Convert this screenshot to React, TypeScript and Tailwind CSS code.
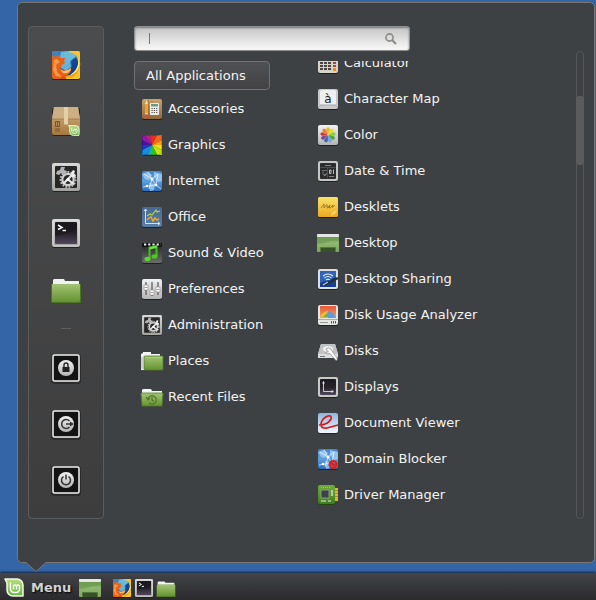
import type { ReactNode } from "react";

type IconProps = { className?: string };

function Gradient({ id, from, to, mid }: { id: string; from: string; to: string; mid?: string }) {
  return (
    <linearGradient id={id} x1="0" y1="0" x2="0" y2="1">
      <stop offset="0" stopColor={from} />
      {mid && <stop offset=".5" stopColor={mid} />}
      <stop offset="1" stopColor={to} />
    </linearGradient>
  );
}

function SharedDefs() {
  return (
    <svg className="absolute size-0" aria-hidden="true">
      <defs>
        <Gradient id="green" from="#a3c476" to="#659330" />
        <Gradient id="deskGreen" from="#6d9a52" mid="#8fb76f" to="#7da85c" />
        <Gradient id="silver" from="#f2f2f2" to="#b4b4b4" />
        <Gradient id="frame" from="#d8d8d6" to="#a2a2a0" />
        <Gradient id="sky" from="#3f87cf" mid="#5c9fdf" to="#2b6fb8" />
        <Gradient id="office" from="#476a94" to="#5a7ea6" />
        <Gradient id="screen" from="#1c1a20" mid="#252129" to="#51475c" />
        <Gradient id="wood" from="#c9a36c" to="#94693a" />
        <Gradient id="box" from="#d3b285" to="#a5783f" />
        <Gradient id="note" from="#fbe36a" to="#eda81f" />
        <Gradient id="paper" from="#8fb5dc" to="#f1f6fb" />
        <Gradient id="video" from="#222" to="#6d6d6d" />
        <Gradient id="flame" from="#f08a2c" to="#d9530f" />
        <Gradient id="globe" from="#5fb2dd" mid="#2f77c0" to="#12377f" />
        <Gradient id="mint" from="#b6e07f" to="#69b53f" />
        <Gradient id="board" from="#6fae3a" to="#3f7d20" />
        <Gradient id="pie" from="#e8583b" to="#f2a267" />
      </defs>
    </svg>
  );
}

function Svg({ box, className, children }: { box: string; className?: string; children: ReactNode }) {
  return (
    <svg viewBox={box} className={`shrink-0 overflow-visible ${className ?? "size-5"}`} aria-hidden="true">
      {children}
    </svg>
  );
}

function Shade() {
  return <rect x="0" y="1" width="20" height="20" rx="2" fill="#000" opacity=".5" />;
}

function Firefox({ className }: IconProps) {
  return (
    <Svg box="0 0 28 28" className={className}>
      <rect y="1" width="28" height="28" rx="2" fill="#000" opacity=".5" />
      <rect width="28" height="28" rx="2" fill="url(#flame)" />
      <path d="M17 0h9a2 2 0 0 1 2 2v24a2 2 0 0 1-2 2H14z" fill="#fbc52a" />
      <path d="M0 7V2a2 2 0 0 1 2-2h14v9L5 6z" fill="#3c84b9" />
      <circle cx="16" cy="13" r="11.500" fill="url(#globe)" />
      <path d="M9 1l6-1 7 3 2 3-4 2-2 3 1 5-5 4-5-3-1-9z" fill="#6fbfdd" opacity=".85" />
      <path d="M19 10l5-4 3 6-2 7-6 5-6 1-3-3 6-2 4-4z" fill="#123f8c" opacity=".9" />
      <path d="M23 2c6 7 4 17-5 22l-6 1 7 2c11-5 12-18 4-25z" fill="#f3a21d" />
      <path d="M25 5c3 8 0 15-7 19 10-2 12-13 7-19z" fill="#ffe95e" />
      <path d="M0 4l3 2 3-2 2 3h6l-2 2 1 3-3 2-2 3c3 4 8 3 11 0 1 4-3 8-8 8l-3 3H2l-2-2z" fill="#e6621b" />
      <path d="M2 9l3-1 3 3-4 3 1 7 5 5-6-1-3-6z" fill="#f79a42" />
      <path d="M8 18c3 3 7 2 11-1 0 4-4 6-8 5z" fill="#f9bd6a" />
    </Svg>
  );
}

function MintBadge() {
  return (
    <g>
      <path d="M1 1h12a6 6 0 0 1 6 6v11H9a6 6 0 0 1-6-6V5z" fill="url(#mint)" stroke="#f3f8ee" strokeWidth="1.500" strokeLinejoin="round" />
      <path d="M6.500 4.500V11a3.500 3.500 0 0 0 3.500 3.500h2A3.300 3.300 0 0 0 15.500 11V8.500a1.500 1.500 0 0 0-3 0V11.500M12.500 8.500a1.500 1.500 0 0 0-3 0v3" fill="none" stroke="#fff" strokeWidth="1.400" />
    </g>
  );
}

function MintLogo({ className }: IconProps) {
  return (
    <Svg box="0 0 20 19" className={className}>
      <MintBadge />
    </Svg>
  );
}

function Package({ className }: IconProps) {
  return (
    <Svg box="0 0 28 28" className={className}>
      <rect y="1" width="28" height="28" rx="2" fill="#000" opacity=".5" />
      <path d="M2 0h24l2 12v14a2 2 0 0 1-2 2H2a2 2 0 0 1-2-2V12z" fill="url(#box)" />
      <path d="M2 0h24l2 12H0z" fill="#cdaf84" />
      <path d="M0 12h28" stroke="#a67e4b" />
      <path d="M12 0h4v17l-1 1-1-1-1 1-1-1z" fill="#e2cfa8" />
      <path d="M3.500 14.500h4v5h-4zM5.500 14.500v5M3 22h5M3 24h5" fill="none" stroke="#7b5329" />
      <g transform="translate(16 18) scale(.58)"><MintBadge /></g>
    </Svg>
  );
}

function Gears({ className }: IconProps) {
  return (
    <Svg box="0 0 28 28" className={className}>
      <rect y="1" width="28" height="28" rx="2" fill="#000" opacity=".5" />
      <rect width="28" height="28" rx="2" fill="url(#frame)" />
      <rect x="3" y="3" width="22" height="22" rx="1" fill="#262626" />
      <circle cx="16" cy="16.500" r="7.500" fill="none" stroke="#bdbdbd" strokeWidth="2" strokeDasharray="1.800 1.340" />
      <circle cx="16" cy="16.500" r="5.700" fill="none" stroke="#cfcfcf" strokeWidth="2.200" />
      <path d="M11 21l9-9M16 16.500l6 5" stroke="#e6e6e6" strokeWidth="2.200" />
      <path d="M19 10l2-3 2 1-1 3 2 1-1 2h-3z" fill="#ececec" />
      <path d="M4 11l1-3 3-1 1-3h4l-1 3 3 1-1 3-3 1-2-2-2 2z" fill="#b4b4b4" />
      <circle cx="16" cy="16.500" r="1.500" fill="#fff" />
    </Svg>
  );
}

function Terminal({ className }: IconProps) {
  return (
    <Svg box="0 0 28 28" className={className}>
      <rect y="1" width="28" height="28" rx="2" fill="#000" opacity=".5" />
      <rect width="28" height="28" rx="2" fill="url(#frame)" />
      <rect x="1" y="1" width="26" height="26" rx="1.500" fill="none" stroke="#dededc" />
      <rect x="3" y="3" width="22" height="22" rx="1" fill="url(#screen)" />
      <path d="M3 17C11 16 19 13 25 10V4H4z" fill="#17151a" opacity=".55" />
      <path d="M6 6l4 2.500L6 10.500M10.500 11.500H14" fill="none" stroke="#fff" strokeWidth="1.500" />
    </Svg>
  );
}

function Folder({ className }: IconProps) {
  return (
    <Svg box="0 -3 30 28" className={className}>
      <path d="M2 7V2l1-1h10l1 2h14v5z" fill="#f1f1f1" />
      <rect y="6" width="30" height="19" rx="1" fill="#4c7325" />
      <rect x="1" y="6" width="28" height="18" rx="1" fill="url(#green)" />
      <path d="M1 6.500h28" stroke="#9fbf77" />
    </Svg>
  );
}

function Desktop({ className }: IconProps) {
  return (
    <Svg box="0 0 22 18" className={className}>
      <rect width="22" height="18" rx="1" fill="url(#deskGreen)" />
      <path d="M0 10C8 10 14 6 22 7V2H0z" fill="#5f9148" opacity=".5" />
      <rect width="22" height="3" rx="1" fill="#e6e6e6" />
      <path d="M3.500 18v-4.500h15V18" fill="#38512a" stroke="#537a3d" />
    </Svg>
  );
}

function SessionIcon({ children }: { children: ReactNode }) {
  return (
    <Svg box="0 0 28 28" className="size-7">
      <rect x="-1" y="0" width="30" height="30" rx="3" fill="#000" opacity=".3" />
      <rect x="1" y="1" width="26" height="26" rx="1.500" fill="#131313" stroke="#f2f2f2" strokeWidth="1.500" />
      <circle cx="14" cy="14" r="8" fill="url(#silver)" />
      {children}
    </Svg>
  );
}

function LockIcon() {
  return (
    <SessionIcon>
      <rect x="10.500" y="13" width="7" height="5" fill="#222" />
      <path d="M12 13v-2a2 2 0 0 1 4 0v2" fill="none" stroke="#222" strokeWidth="1.400" />
    </SessionIcon>
  );
}

function LogoutIcon() {
  return (
    <SessionIcon>
      <path d="M17.500 11a4.500 4.500 0 1 0 0 6" fill="none" stroke="#333" strokeWidth="1.500" />
      <path d="M14 14h5" stroke="#333" strokeWidth="1.500" />
      <path d="M18 11.500l4 2.500-4 2.500z" fill="#333" />
    </SessionIcon>
  );
}

function PowerIcon() {
  return (
    <SessionIcon>
      <path d="M11.500 10.500a4.500 4.500 0 1 0 5 0M14 8.500v5" fill="none" stroke="#333" strokeWidth="1.500" />
    </SessionIcon>
  );
}

function Accessories() {
  return (
    <Svg box="0 0 20 20">
      <Shade />
      <rect width="20" height="20" rx="2" fill="url(#wood)" />
      <path d="M10 2v17M6.500 1v18" stroke="#8d6536" opacity=".5" />
      <path d="M3 5l1.500-4L6 5v9H3z" fill="#f4a122" />
      <path d="M3 5l1.500-4L6 5z" fill="#f3dfba" />
      <path d="M3 14h3v1.500H3z" fill="#ddd" />
      <path d="M3 15.500h3V18H3z" fill="#d94b4b" />
      <rect x="8" y="4" width="9" height="12" rx="1" fill="#ecebe6" />
      <rect x="9" y="5" width="7" height="2.500" fill="#6a9a85" />
      <path d="M9.500 9.500h6M9.500 11.500h6M9.500 13.500h6" stroke="#555" strokeWidth="1.200" strokeDasharray="1.200 1.100" />
    </Svg>
  );
}

const wheel = [
  ["#ef2b1e", "M10 10L8 0h7z"],
  ["#f46a1d", "M10 10l5-10h5v5z"],
  ["#f9a417", "M10 10l10-5v5z"],
  ["#f8e411", "M10 10h10v5z"],
  ["#c3e410", "M10 10l10 5v5h-5z"],
  ["#32c322", "M10 10l5 10h-5z"],
  ["#12b6a5", "M10 10v10H5z"],
  ["#168de0", "M10 10L5 20H0v-5z"],
  ["#1b38c6", "M10 10L0 15v-5z"],
  ["#4613a4", "M10 10H0V5z"],
  ["#8a1bab", "M10 10L0 5V0h3z"],
  ["#c0217a", "M10 10L3 0h5z"],
];

function Graphics() {
  return (
    <Svg box="0 0 20 20">
      <Shade />
      {wheel.map(([color, d]) => (
        <path key={color} d={d} fill={color} />
      ))}
      <rect x=".5" y=".5" width="19" height="19" rx="1.500" fill="none" stroke="#000" opacity=".2" />
    </Svg>
  );
}

function Network() {
  return (
    <>
      <Shade />
      <rect width="20" height="20" rx="2" fill="url(#sky)" />
      <path d="M0 3l6-2 4 3-3 5-4-1zM12 1l8 2v7l-4 1-4-5zM7 12l6 1-1 6-4 1z" fill="#a9d0f3" opacity=".75" />
      <path d="M2 3l8 5 6-5M10 8l-3 10M10 8l4 6 5 4M1 16l13-2M6 1l4 7M14 14l2-11" fill="none" stroke="#fff" strokeWidth=".8" opacity=".8" />
      <circle cx="10" cy="8" r="1.500" fill="#fff" />
      <circle cx="5" cy="15" r="1.300" fill="#fff" />
      <circle cx="14" cy="14" r="1.300" fill="#fff" />
    </>
  );
}

function Internet() {
  return (
    <Svg box="0 0 20 20">
      <Network />
    </Svg>
  );
}

function DomainBlocker() {
  return (
    <Svg box="0 0 20 20">
      <Network />
      <circle cx="15" cy="15.500" r="3.600" fill="#b44a58" stroke="#d81f1f" strokeWidth="1.800" />
      <path d="M12.500 13.500l5 4" stroke="#d81f1f" strokeWidth="1.800" />
    </Svg>
  );
}

function Office() {
  return (
    <Svg box="0 0 20 20">
      <Shade />
      <rect width="20" height="20" rx="2" fill="url(#office)" />
      <path d="M3.500 2v14.500H18M2 4l1.500-2L5 4M16 15l2 1.500L16 18" fill="none" stroke="#d4e0ec" />
      <path d="M5 9l3-2 2 1 4-5 1 2 3-1" fill="none" stroke="#b5d34b" strokeWidth="1.200" />
      <path d="M5 13l2-2 2-1 2 4 2-3 2 2 2-1" fill="none" stroke="#e9a925" strokeWidth="1.500" />
    </Svg>
  );
}

function SoundVideo() {
  return (
    <Svg box="0 0 20 20">
      <Shade />
      <rect width="20" height="20" rx="2" fill="url(#video)" />
      <rect width="20" height="4" rx="1" fill="#111" />
      <path d="M2 1.500h17" stroke="#eee" strokeWidth="2" strokeDasharray="2.200 2" />
      <path d="M7.500 16V4.500l7-1.500v10" fill="none" stroke="#3fc21f" strokeWidth="2" />
      <path d="M7.500 5.500l7-1.500" stroke="#7be04b" strokeWidth="2" />
      <ellipse cx="5.500" cy="16" rx="3" ry="2.200" fill="#5ad62e" />
      <ellipse cx="12.500" cy="13.500" rx="3" ry="2.200" fill="#4cc925" />
    </Svg>
  );
}

function Preferences() {
  return (
    <Svg box="0 0 20 20">
      <Shade />
      <rect width="20" height="20" rx="2" fill="url(#silver)" />
      <path d="M4 3v13M10 3v14M16 3v13" stroke="#555" strokeWidth="1.200" />
      <path d="M2 6h4v5H2zM8 11h4v5H8zM14 8h4v5h-4z" fill="#fff" stroke="#888" strokeWidth=".6" />
      <path d="M2.500 8.500h3M8.500 13.500h3M14.500 10.500h3" stroke="#888" strokeWidth=".8" />
    </Svg>
  );
}

function Administration() {
  return <Gears className="size-5" />;
}

function Places() {
  return (
    <Svg box="0 0 22 20" className="-mx-px h-5 w-[22px]">
      <path d="M0 19V3l2-1V1h8v2h9v3H4v13z" fill="#f5f5f5" />
      <path d="M1 6v12" stroke="#aaa" />
      <rect x="3" y="5" width="19" height="14" rx="1" fill="url(#green)" stroke="#517c28" strokeWidth=".8" />
      <path d="M4 6.500h17" stroke="#a9cf7c" />
    </Svg>
  );
}

function RecentFiles() {
  return (
    <Svg box="0 0 22 20" className="-mx-px h-5 w-[22px]">
      <path d="M1 7V3l1-1h8l1 2h10v3z" fill="#f5f5f5" />
      <path d="M0 6h22l-1 13H1z" fill="url(#green)" stroke="#517c28" strokeWidth=".8" />
      <path d="M7 11.500a4.300 4.300 0 1 1 1 4.500M5 10l2 3 2-2M11 10v3l2 1" fill="none" stroke="#4c7128" strokeWidth="1.100" />
    </Svg>
  );
}

function Calculator() {
  return (
    <Svg box="0 0 20 20">
      <Shade />
      <rect width="20" height="20" rx="2" fill="#d8d3c8" />
      <rect x="2" y="2" width="16" height="5" fill="#7c8f78" />
      {[10, 13, 16].map((y) => (
        <path key={y} d={`M2 ${y}h12`} stroke="#4a4540" strokeWidth="2" strokeDasharray="3 1" />
      ))}
      <path d="M15 10h3M15 13h3" stroke="#9c4b43" strokeWidth="2" />
      <path d="M15 16.500h3" stroke="#ec8a1c" strokeWidth="3" />
    </Svg>
  );
}

function CharacterMap() {
  return (
    <Svg box="0 0 20 20">
      <Shade />
      <rect width="20" height="20" rx="2" fill="#c9c9c9" />
      <rect x="2" y="1" width="16" height="15" rx="2" fill="#efefef" />
      <path d="M0 19l3-3h14l3 3" fill="none" stroke="#aaa" />
      <text x="10" y="14" textAnchor="middle" fontSize="12" fontFamily="DejaVu Sans, sans-serif" fill="#222">à</text>
    </Svg>
  );
}

const petals = ["#f0b51a", "#dfe02a", "#8ad02c", "#4aa53c", "#6aa5e0", "#3f62a8", "#7a4a94", "#d63838", "#ee7b22"];

function ColorIcon() {
  return (
    <Svg box="0 0 20 20">
      <Shade />
      <rect width="20" height="20" rx="2" fill="url(#silver)" />
      {petals.map((color, i) => (
        <path key={color} d="M10 9L8.400 4Q10 1 11.600 4z" fill={color} stroke={color} strokeWidth=".6" transform={`rotate(${i * 40} 10 10)`} />
      ))}
    </Svg>
  );
}

function DateTime() {
  return (
    <Svg box="0 0 20 20">
      <Shade />
      <rect width="20" height="20" rx="2" fill="#c6c6c3" />
      <rect x="2" y="2" width="16" height="16" rx="1" fill="#2a2c2d" />
      <path d="M2.500 6.500h15M9.500 7v10" stroke="#4d4f50" />
      <path d="M7 4.500h6M11 15.500h5" stroke="#999" strokeWidth=".8" />
      <path d="M4 9.500h5M4 11h2" stroke="#777" strokeWidth=".8" />
      <path d="M11.500 9h1.500v3.500h-1.500zM15.500 8.500v4.500" fill="none" stroke="#ccc" strokeWidth=".9" />
      <path d="M5 12.500l2 2 1.500-2" fill="none" stroke="#ccc" strokeWidth=".8" />
      <circle cx="6.500" cy="14.500" r=".8" fill="#d44" />
    </Svg>
  );
}

function Desklets() {
  return (
    <Svg box="0 0 20 20">
      <Shade />
      <rect width="20" height="20" rx="1.500" fill="url(#note)" />
      <path d="M3 11l3-4v4l3-4M8 10q1-2 2-1t-1 2q2 0 3-3l-1 3q2 0 3-2t1 0q-2 2 0 1l2-2" fill="none" stroke="#735d17" strokeWidth=".6" />
      <path d="M13 19l1-4 5-2-2 4z" fill="#fbd35a" />
    </Svg>
  );
}

function DesktopApp() {
  return <Desktop className="-mx-px h-[18px] w-[22px]" />;
}

function DesktopSharing() {
  return (
    <Svg box="0 0 20 20">
      <Shade />
      <rect width="20" height="20" rx="2" fill="#dedede" />
      <rect x="2" y="2" width="16" height="16" fill="#173f8d" />
      <path d="M2 2h16v6L2 14z" fill="#2e65b9" />
      <path d="M5 7q5-4 10 0M6.500 9q3.500-3 7 0M8 11q2-1.500 4 0" fill="none" stroke="#e8f0fb" strokeWidth="1.100" />
      <path d="M6 16L20 9" stroke="#272e36" strokeWidth="2.500" />
      <path d="M5 16l5-3" stroke="#c6cbd0" strokeWidth="1.200" />
    </Svg>
  );
}

function DiskUsage() {
  return (
    <Svg box="0 0 20 20">
      <Shade />
      <rect width="20" height="20" rx="2" fill="#e6e6e3" />
      <rect x="2" y="1" width="16" height="12" fill="url(#pie)" />
      <path d="M2 12q2-5 8-6l1 6z" fill="#f3bf2c" />
      <path d="M5 12l5-5 1 5z" fill="#7fae3a" />
      <path d="M10 6q6 1 8 7h-8z" fill="#5c9be0" />
      <path d="M0 14.500h20" stroke="#aaa" />
      <path d="M2 17.500h8" stroke="#999" />
      <path d="M13.500 16v2.500M15.500 16v2.500M17.500 16v2.500" stroke="#555" />
    </Svg>
  );
}

function Disks() {
  return (
    <Svg box="0 0 20 20">
      <path d="M3 3h14l3 10v3l-1 1H0v-4z" fill="#dedede" />
      <path d="M3 3h14l3 10H0z" fill="#c2c2c2" />
      <ellipse cx="10" cy="8" rx="6" ry="3.500" fill="#ececec" stroke="#aaa" strokeWidth=".6" />
      <path d="M2 15.500h5" stroke="#777" />
      <path d="M8 8q2-2 5 0l1 2 5 7q1 2-1 2.500L12 12.500 8.500 13 8 11l2.500 0z" fill="#fff" stroke="#888" strokeWidth=".7" />
    </Svg>
  );
}

function Displays() {
  return (
    <Svg box="0 0 20 20">
      <Shade />
      <rect width="20" height="20" rx="2" fill="#c9c9c7" />
      <rect x="2" y="2" width="16" height="16" rx="1" fill="url(#screen)" />
      <path d="M5.500 4.500v10H15" fill="none" stroke="#ddd" strokeWidth=".9" />
      <path d="M4 6.500L5.500 4 7 6.500zM13.500 13l2.500 1.500-2.500 1.500z" fill="#ddd" />
    </Svg>
  );
}

function DocumentViewer() {
  return (
    <Svg box="0 0 20 20">
      <Shade />
      <rect width="20" height="20" rx="2" fill="url(#paper)" />
      <path d="M1 12q9 0 12-6 1-4-3-3-6 2-7 8 0 5 6 4l11-3" fill="none" stroke="#d01b1e" strokeWidth="1.700" />
    </Svg>
  );
}

function DriverManager() {
  return (
    <Svg box="0 0 20 20">
      <path d="M15 3h5v13h-5z" fill="#d9b63c" />
      <path d="M16 5.500h4M16 8.500h4M16 11.500h4" stroke="#97781a" strokeWidth=".7" />
      <rect x="0" y="1" width="17" height="19" rx="2" fill="#26460f" />
      <rect width="17" height="19" rx="2" fill="url(#board)" />
      <rect x="3" y="5" width="8" height="8" fill="#3a4147" stroke="#8b9a80" />
      <rect x="13" y="5" width="2" height="6" fill="#b9c7a7" />
      <path d="M3 2.500h9" stroke="#9ccb6c" strokeDasharray="1 1" />
      <path d="M3 16h5M10 16h3" stroke="#b8c7a4" strokeWidth="1.500" />
    </Svg>
  );
}

const categories = [
  { label: "Accessories", Icon: Accessories },
  { label: "Graphics", Icon: Graphics },
  { label: "Internet", Icon: Internet },
  { label: "Office", Icon: Office },
  { label: "Sound & Video", Icon: SoundVideo },
  { label: "Preferences", Icon: Preferences },
  { label: "Administration", Icon: Administration },
  { label: "Places", Icon: Places },
  { label: "Recent Files", Icon: RecentFiles },
];

const applications = [
  { label: "Calculator", Icon: Calculator },
  { label: "Character Map", Icon: CharacterMap },
  { label: "Color", Icon: ColorIcon },
  { label: "Date & Time", Icon: DateTime },
  { label: "Desklets", Icon: Desklets },
  { label: "Desktop", Icon: DesktopApp },
  { label: "Desktop Sharing", Icon: DesktopSharing },
  { label: "Disk Usage Analyzer", Icon: DiskUsage },
  { label: "Disks", Icon: Disks },
  { label: "Displays", Icon: Displays },
  { label: "Document Viewer", Icon: DocumentViewer },
  { label: "Domain Blocker", Icon: DomainBlocker },
  { label: "Driver Manager", Icon: DriverManager },
];

const favorites = [
  { label: "Firefox", icon: <Firefox className="size-7" /> },
  { label: "Software Manager", icon: <Package className="size-7" /> },
  { label: "System Settings", icon: <Gears className="size-7" /> },
  { label: "Terminal", icon: <Terminal className="size-7" /> },
  { label: "Files", icon: <Folder className="h-7 w-[30px]" /> },
];

const session = [
  { label: "Lock screen", icon: <LockIcon /> },
  { label: "Logout", icon: <LogoutIcon /> },
  { label: "Quit", icon: <PowerIcon /> },
];

function SideButton({ label, icon }: { label: string; icon: ReactNode }) {
  return (
    <button type="button" aria-label={label} className="flex h-14 w-14 items-center justify-center">
      {icon}
    </button>
  );
}

function MenuRow({ label, Icon }: { label: string; Icon: () => ReactNode }) {
  return (
    <li>
      <button type="button" className="flex h-9 w-full items-center gap-1.5 pl-2 text-left whitespace-nowrap">
        <Icon />
        {label}
      </button>
    </li>
  );
}

function Favorites() {
  return (
    <nav aria-label="Favorites" className="flex w-[76px] shrink-0 flex-col items-center rounded-[4px] border border-[#5c5c5c] bg-linear-to-b from-[#4b4c4d] to-[#3d3d3e] pt-2.5">
      {favorites.map((item) => (
        <SideButton key={item.label} {...item} />
      ))}
      <hr className="mt-[11px] mb-[11px] w-2.5 border-[#5e5e5e]" />
      {session.map((item) => (
        <SideButton key={item.label} {...item} />
      ))}
    </nav>
  );
}

function SearchBox() {
  return (
    <div className="relative h-[25px] w-[276px]">
      <input
        type="text"
        aria-label="Search"
        className="h-full w-full rounded-[3px] border border-[#8f8f8f] bg-linear-to-b from-[#c4c4c4] to-[#fafafa] pr-8 pl-3.5 text-[#444] shadow-[inset_0_1px_2px_#777] outline-none"
      />
      <span className="pointer-events-none absolute top-[7px] left-[15px] h-[11px] w-px bg-[#777]" />
      <svg viewBox="0 0 12 12" className="pointer-events-none absolute top-[7px] right-[13px] size-3" fill="none" stroke="#8b8b87" aria-hidden="true">
        <circle cx="4.500" cy="4.500" r="3.600" strokeWidth="1.600" />
        <path d="M7.200 7.200L11 11" strokeWidth="2" />
      </svg>
    </div>
  );
}

function StartMenu() {
  return (
    <main className="relative mt-0.5 mr-px mb-2.5 ml-[17px] flex flex-1 rounded-[5px] border border-[#777773] bg-[#3d4143] pt-[23px] pr-2.5 pb-[43px] pl-2.5">
      <Favorites />
      <div className="ml-[30px] flex min-w-0 flex-1 flex-col">
        <SearchBox />
        <div className="mt-2.5 flex gap-10">
          <div className="w-[136px] shrink-0">
            <button type="button" className="flex h-[29px] w-full items-center rounded-[4px] border border-[#727272] bg-linear-to-b from-[#505153] to-[#424244] pl-[11px]">
              All Applications
            </button>
            <ul className="mt-px">
              {categories.map((item) => (
                <MenuRow key={item.label} {...item} />
              ))}
            </ul>
          </div>
          <div className="min-w-0 flex-1 overflow-hidden">
            <ul className="-mt-4">
              {applications.map((item) => (
                <MenuRow key={item.label} {...item} />
              ))}
            </ul>
          </div>
        </div>
      </div>
      <div className="mt-[25px] flex w-2 shrink-0 flex-col rounded-full border border-[#555657] pt-11">
        <div className="-mx-px h-[69px] rounded-[3px] bg-[#5b5b5b]" />
      </div>
      <svg viewBox="0 0 20 11" className="absolute top-full left-2 h-[11px] w-5" aria-hidden="true">
        <path d="M0 -1L0 .5L10 10L20 .5V-1z" fill="#3d4143" />
        <path d="M0 .5L10 9.500L20 .5" fill="none" stroke="#777773" />
      </svg>
    </main>
  );
}

function Taskbar() {
  return (
    <footer className="flex h-[27px] items-center bg-linear-to-b from-[#434448] to-[#2b2b2e] pt-0.5 pl-1 shadow-[0_-1px_2px_#14253d]">
      <button type="button" className="flex items-center gap-[7px] font-bold text-[#d2d2d2] [text-shadow:1px_1px_2px_#000]">
        <MintLogo className="h-[19px] w-5" />
        Menu
      </button>
      <button type="button" aria-label="Show desktop" className="ml-2">
        <Desktop className="h-[18px] w-[22px]" />
      </button>
      <div className="ml-3 flex items-center gap-1">
        <button type="button" aria-label="Firefox"><Firefox className="size-[18px]" /></button>
        <button type="button" aria-label="Terminal"><Terminal className="size-[18px]" /></button>
        <button type="button" aria-label="Files" className="-ml-px"><Folder className="h-[18px] w-5" /></button>
      </div>
    </footer>
  );
}

export default function App() {
  return (
    <div className="flex min-h-screen flex-col bg-[#3465a7] font-['DejaVu_Sans',sans-serif] text-[13px] leading-4 text-[#f4f4f4]">
      <SharedDefs />
      <StartMenu />
      <Taskbar />
    </div>
  );
}
